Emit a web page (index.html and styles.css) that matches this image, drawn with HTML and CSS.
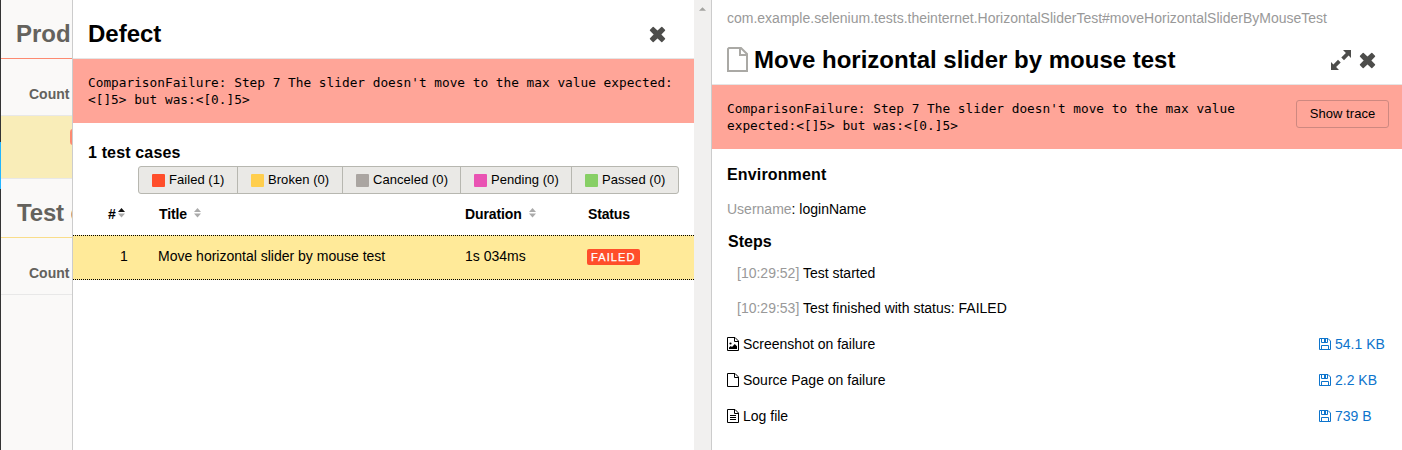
FILE: index.html
```html
<!DOCTYPE html>
<html lang="en">
<head>
<meta charset="utf-8">
<title>Defect</title>
<link rel="stylesheet" href="styles.css">
</head>
<body>
<svg class="defs" aria-hidden="true">
  <symbol id="close" viewBox="0 0 17 17"><path d="M4.2 1.5L8.5 5.6L12.8 1.5L15.5 4.2L11.4 8.5L15.5 12.8L12.8 15.5L8.5 11.4L4.2 15.5L1.5 12.8L5.6 8.5L1.5 4.2Z" fill="currentColor" stroke="currentColor" stroke-width="1.4" stroke-linejoin="round"/></symbol>
  <symbol id="sort" viewBox="0 0 7 10"><path class="up" d="M0 4L3.5 0L7 4Z"/><path class="down" d="M0 5.5L3.5 9.5L7 5.5Z"/></symbol>
  <symbol id="file" viewBox="0 0 12 14"><path d="M.5.5H8L11.5 4V13.5H.5ZM7.5.5V4.5H11.5" fill="none" stroke="currentColor"/></symbol>
  <symbol id="save" viewBox="0 0 12 12"><path d="M.5.5H9L11.5 3V11.5H.5ZM2.5 11.5V7.5H9.5V11.5M2.5.5V4.5H8.5V.5" fill="none" stroke="currentColor"/><path d="M5 1H7V4H5Z" fill="currentColor"/></symbol>
</svg>
<div class="app">
  <div class="rail"><div class="rail-active"></div></div>
  <div class="overview">
    <h2 class="group-title red">Prod</h2>
    <div class="group-head">Count</div>
    <div class="group-row"><span class="count-badge"></span></div>
    <h2 class="group-title yellow">Test d</h2>
    <div class="group-head">Count</div>
  </div>

  <section class="defect">
    <header class="defect-head"><h1>Defect</h1><svg class="close"><use href="#close"/></svg></header>
    <pre class="message">ComparisonFailure: Step 7 The slider doesn't move to the max value expected:
&lt;[]5&gt; but was:&lt;[0.]5&gt;</pre>
    <h3 class="cases-title">1 test cases</h3>
    <div class="filters">
      <div class="filter failed"><i></i><span>Failed (1)</span></div>
      <div class="filter broken"><i></i><span>Broken (0)</span></div>
      <div class="filter canceled"><i></i><span>Canceled (0)</span></div>
      <div class="filter pending"><i></i><span>Pending (0)</span></div>
      <div class="filter passed"><i></i><span>Passed (0)</span></div>
    </div>
    <div class="table-row table-head">
      <div class="num"><span>#</span><svg class="sort asc"><use href="#sort"/></svg></div>
      <div><span class="title-label">Title</span><svg class="sort"><use href="#sort"/></svg></div>
      <div><span class="duration-label">Duration</span><svg class="sort"><use href="#sort"/></svg></div>
      <div class="status-label">Status</div>
    </div>
    <div class="table-row table-item">
      <div class="num index">1</div>
      <div class="case-name">Move horizontal slider by mouse test</div>
      <div>1s 034ms</div>
      <div><span class="status">FAILED</span></div>
    </div>
  </section>
  <div class="scrollbar"><svg viewBox="0 0 8 4"><path d="M0 4L4 0L8 4Z"/></svg></div>

  <section class="testcase">
    <div class="full-name">com.example.selenium.tests.theinternet.HorizontalSliderTest#moveHorizontalSliderByMouseTest</div>
    <header class="case-head">
      <svg class="page-icon" viewBox="0 0 21 25"><path d="M2 1H14L20 7V24H1V2ZM13 1V8H20" /></svg>
      <h1>Move horizontal slider by mouse test</h1>
      <svg class="expand" viewBox="0 0 22 22"><path d="M13 1H21V9L18.6 6.6L14 11.2L11.3 8.5L15.9 3.9ZM1 21V13L3.4 15.4L8 10.8L10.7 13.5L6.1 18.1L9 21Z"/></svg>
      <svg class="close"><use href="#close"/></svg>
    </header>
    <div class="case-error">
      <pre>ComparisonFailure: Step 7 The slider doesn't move to the max value
expected:&lt;[]5&gt; but was:&lt;[0.]5&gt;</pre>
      <button class="trace">Show trace</button>
    </div>
    <h3 class="env-title">Environment</h3>
    <div class="env"><span class="muted">Username</span>: loginName</div>
    <h3 class="steps-title">Steps</h3>
    <div class="step"><span class="muted">[10:29:52]</span> Test started</div>
    <div class="step"><span class="muted">[10:29:53]</span> Test finished with status: FAILED</div>
    <div class="attachments">
      <div class="attachment">
        <svg class="file" viewBox="0 0 12 14"><use href="#file"/><path d="M2 12V10.5L3.8 9L5 10L7.8 7L10 9.2V12Z"/><circle cx="3.5" cy="6.5" r="1.1"/></svg>
        <span class="name">Screenshot on failure</span>
        <a class="size"><svg><use href="#save"/></svg>54.1 KB</a>
      </div>
      <div class="attachment">
        <svg class="file" viewBox="0 0 12 14"><use href="#file"/></svg>
        <span class="name">Source Page on failure</span>
        <a class="size"><svg><use href="#save"/></svg>2.2 KB</a>
      </div>
      <div class="attachment">
        <svg class="file" viewBox="0 0 12 14"><use href="#file"/><path d="M3 6H9V7H3ZM3 8H9V9H3ZM3 10H9V11H3Z"/></svg>
        <span class="name">Log file</span>
        <a class="size"><svg><use href="#save"/></svg>739 B</a>
      </div>
    </div>
  </section>
</div>
</body>
</html>
```
FILE: styles.css
```css
* { box-sizing: border-box; }
body { margin: 0; font: 14px/20px "Liberation Sans", Arial, sans-serif; color: #000; background: #fff; overflow: hidden; }
h1, h2, h3, pre { margin: 0; }
h1 { font-size: 24px; line-height: 30px; }
h3 { font-size: 16px; line-height: 20px; }
svg { display: block; flex: none; }
.defs { position: absolute; width: 0; height: 0; }
.app { display: flex; height: 450px; }

.rail { width: 1px; background: #343434; padding-top: 142px; flex: none; }
.rail-active { height: 47px; background: #22b5ff; }
.overview { width: 71px; flex: none; overflow: hidden; background: #faf9f8; color: #64625d; white-space: nowrap; }
.group-title { font-size: 24px; line-height: 30px; height: 59px; padding: 19px 0 0 15px; border-bottom: 1px solid #fd8a71; }
.group-title.yellow { padding-left: 16px; letter-spacing: -.15px; border-bottom-color: #f9dd8a; }
.group-head { height: 57px; padding: 26px 0 0 28px; font-weight: bold; line-height: 18px; border-bottom: 1px solid #e8e8e8; }
.group-row { height: 63px; background: #f9edb8; border-bottom: 1px solid #e8e8e8; padding: 13px 0 0 69px; }
.count-badge { display: block; width: 20px; height: 16px; border-radius: 3px; background: #fd8a71; }

.defect { width: 622px; flex: none; border-left: 1px solid #ccc; }
.defect-head { height: 59px; display: flex; justify-content: space-between; align-items: flex-start; padding: 19px 28px 0 15px; border-bottom: 1px solid #e5e5e5; }
.close { width: 17px; height: 17px; color: #4d4d4b; }
.defect-head .close { margin-top: 7px; }
pre { font: 12.79px/17px "DejaVu Sans Mono", monospace; }
.message { height: 64px; padding: 15px 15px 0; background: #ffa598; }
.cases-title { margin: 20px 0 3px 15px; letter-spacing: .15px; }
.filters { display: flex; width: 541px; height: 28px; margin-left: 65px; border: 1px solid #b7b7b0; border-radius: 3px; background: #eae9e6; font-size: 13px; }
.filter { display: flex; align-items: center; gap: 4px; padding-left: 13px; border-right: 1px solid #b7b7b0; white-space: nowrap; }
.filter:last-child { border-right: 0; flex: 1; }
.filter span { letter-spacing: .05px; }
.filter i { width: 13px; height: 13px; border-radius: 1px; flex: none; }
.failed { width: 99px; }
.broken { width: 105px; }
.canceled { width: 118px; }
.pending { width: 111px; }
.failed i { background: #ff4e2b; }
.broken i { background: #ffce4d; }
.canceled i { background: #aaa5a1; }
.pending i { background: #e953b3; }
.passed i { background: #87cf65; }
.table-row { display: grid; grid-template-columns: 85px 307px 122px 1fr; align-items: center; }
.table-row > div { display: flex; align-items: center; }
.table-head { height: 41px; padding-bottom: 2px; font-weight: bold; }
.table-head > .num { padding-left: 35px; gap: 3px; }
.title-label { margin: 0 7px 0 1px; letter-spacing: -.1px; }
.duration-label { margin-right: 7px; letter-spacing: -.1px; }
.status-label { padding-left: 1px; letter-spacing: -.15px; }
.sort { width: 7px; height: 10px; fill: #aaa; color: #aaa; margin-bottom: 1px; }
.sort.asc { color: #111; margin-left: -1px; }
.up { fill: currentColor; }
.table-item { height: 45px; background: #ffea99; border-top: 1px dotted #000; border-bottom: 1px dotted #000; padding-bottom: 3px; }
.table-item .index { padding-left: 47px; }
.status { height: 16px; margin-top: 2px; padding: 0 4px; border-radius: 2px; background: #ff4e2b; color: #fff; font-size: 11px; line-height: 17px; letter-spacing: 1.1px; -webkit-text-stroke: .25px #fff; }

.scrollbar { width: 17px; flex: none; background: #f1f0ef; padding: 7px 0 0 5px; }
.scrollbar svg { width: 7px; height: 4px; fill: #a3a3a0; }

.testcase { flex: 1; min-width: 0; border-left: 1px solid #ccc; }
.full-name { height: 38px; padding: 8px 0 0 15px; color: #999; white-space: nowrap; }
.case-head { display: flex; height: 47px; padding: 7px 26px 0 15px; border-bottom: 1px solid #e5e5e5; }
.page-icon { width: 21px; height: 25px; margin: 2px 6px 0 0; fill: none; stroke: #aaa9a5; stroke-width: 2; }
.expand { width: 22px; height: 22px; margin: 4px 7px 0 auto; fill: #4d4d4b; }
.case-head .close { margin-top: 7px; }
.case-error { display: flex; justify-content: space-between; align-items: flex-start; height: 64px; padding: 15px 13px 0 15px; background: #ffa598; }
.trace { width: 93px; height: 28px; padding: 0; border: 1px solid #ce8880; border-radius: 3px; background: none; font: 13px/20px "Liberation Sans", Arial, sans-serif; color: #000; letter-spacing: .05px; }
.env-title { margin: 16px 0 14px 15px; letter-spacing: .15px; }
.env { margin-left: 15px; }
.steps-title { margin: 13px 0 11px 16px; }
.step { margin: 0 0 15px 25px; }
.muted { color: #999; }
.attachments { margin-top: 16px; }
.attachment { display: flex; align-items: center; height: 20px; margin-bottom: 16px; padding-left: 15px; }
.file { width: 12px; height: 14px; margin-right: 4px; }
.size { display: flex; align-items: center; gap: 4px; width: 83px; margin-left: auto; color: #0d74cc; }
.size svg { width: 12px; height: 12px; }
```
